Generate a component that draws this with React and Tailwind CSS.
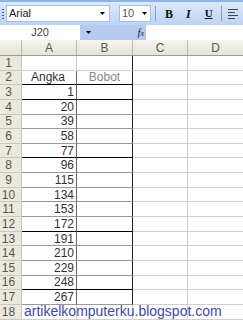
import React from 'react';

const nums = [null, null, 1, 20, 39, 58, 77, 96, 115, 134, 153, 172, 191, 210, 229, 248, 267, null];
// lines under rows that came out dark in the scaled shot
const darkBottom = [2, 3, 7, 12, 16];

const Arrow = () => (
  <svg width="5" height="3" viewBox="0 0 5 3">
    <path d="M0 0h5L2.5 3z" fill="#000" />
  </svg>
);

export default function App() {
  return (
    <div className="relative w-[243px] h-[320px] overflow-hidden bg-white text-[#333] font-['Liberation_Sans',Arial,sans-serif]">
      {/* toolbar */}
      <div className="h-[25px] flex items-center border-t-2 border-[#8fb3e8] bg-gradient-to-b from-[#dce9fb] to-[#bcd3f4]">
        <div className="w-[2px] h-[12px] ml-[2px] mr-[2px] bg-[radial-gradient(circle,#3b5d94_40%,transparent_45%)] bg-[length:2px_3px]" />
        <div className="w-[104px] h-[17px] bg-white border border-[#a9bfdc] flex items-center justify-between pl-[2px] pr-[4px]">
          <span className="text-[11px] leading-none text-[#222]">Arial</span>
          <Arrow />
        </div>
        <div className="ml-[9px] w-[32px] h-[17px] bg-white border border-[#a9bfdc] flex items-center justify-between pl-[2px] pr-[3px]">
          <span className="text-[11px] leading-none text-[#555]">10</span>
          <Arrow />
        </div>
        <div className="ml-[4px] w-px h-[15px] bg-[#7da2ce]" />
        <span className="ml-[9px] text-[12px] font-bold font-['Liberation_Serif',serif] text-[#111]">B</span>
        <span className="ml-[13px] text-[12px] italic font-bold font-['Liberation_Serif',serif] text-[#111]">I</span>
        <span className="ml-[14px] text-[11px] font-bold underline font-['Liberation_Serif',serif] text-[#111]">U</span>
        <div className="ml-[8px] w-px h-[15px] bg-[#7da2ce]" />
        <div className="ml-[6px] flex flex-col gap-[2px]">
          <div className="w-[10px] h-px bg-[#444]" />
          <div className="w-[7px] h-px bg-[#444]" />
          <div className="w-[10px] h-px bg-[#444]" />
          <div className="w-[7px] h-px bg-[#444]" />
        </div>
      </div>

      {/* formula bar */}
      <div className="h-[15px] flex">
        <div className="w-[80px] bg-white flex items-center justify-center text-[11px] text-[#444]">J20</div>
        <div className="w-[66px] bg-[#b4cbef] flex items-center justify-between pl-[6px] pr-[2px]">
          <Arrow />
          <span className="text-[11px] italic font-['Liberation_Serif',serif] text-[#222]">f<span className="text-[8px]">x</span></span>
        </div>
        <div className="flex-1 bg-white" />
      </div>

      {/* column headers */}
      <div className="h-[16px] flex bg-gradient-to-b from-[#f6f5ef] to-[#e6e4d6] border-b border-[#9c9b91] text-[12px] text-[#555]">
        <div className="w-[22px] border-r border-[#b9b8ad]" />
        <div className="w-[55px] border-r border-[#b9b8ad] flex items-center justify-center">A</div>
        <div className="w-[56px] border-r border-[#b9b8ad] flex items-center justify-center">B</div>
        <div className="w-[55px] border-r border-[#b9b8ad] flex items-center justify-center">C</div>
        <div className="flex-1 flex items-center justify-center">D</div>
      </div>

      {/* rows */}
      {nums.map((n, i) => {
        const r = i + 1;
        const inRange = r >= 2 && r <= 17;
        const bottom = darkBottom.includes(r) ? 'border-b-black' : inRange ? 'border-b-[#999]' : 'border-b-[#cfcfcf]';
        return (
          <div key={r} className="h-[14.65px] flex text-[12px] leading-none">
            <div className="w-[22px] bg-[#ebe9dc] border-r border-b border-[#cac8ba] flex items-center">
              <span className="w-[17px] text-center text-[#555]">{r}</span>
            </div>
            <div className={`w-[55px] border-b border-r ${bottom} ${inRange ? 'border-r-[#666]' : 'border-r-[#cfcfcf]'} flex items-center justify-end pr-[2px]`}>
              {r === 2 ? <span className="w-full text-center">Angka</span> : n}
            </div>
            <div className={`w-[56px] border-b border-r ${bottom} ${r <= 17 ? 'border-r-[#222]' : 'border-r-[#cfcfcf]'} flex items-center justify-center`}>
              {r === 2 && <span className="text-[#888]">Bobot</span>}
            </div>
            <div className="w-[55px] border-b border-r border-[#cfcfcf]" />
            <div className="flex-1 border-b border-[#cfcfcf]" />
          </div>
        );
      })}

      <div className="absolute left-[24px] top-[304px] text-[14px] leading-none text-[#4545a8]">artikelkomputerku.blogspot.com</div>
    </div>
  );
}
